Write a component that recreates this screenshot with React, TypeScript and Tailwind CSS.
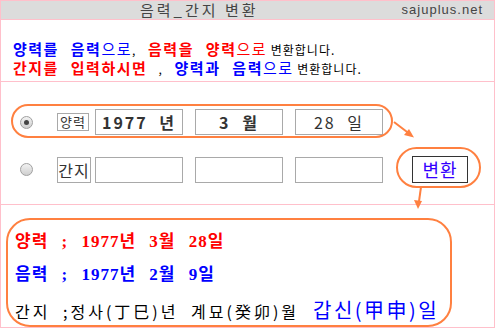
import React from 'react';

const ko = "font-['Noto_Sans_CJK_KR',sans-serif]";
const serif = "font-['Liberation_Serif','Noto_Sans_CJK_KR',serif]";

function Radio({ checked }: { checked?: boolean }) {
  return (
    <span className="flex h-[13px] w-[13px] items-center justify-center rounded-full border border-[#a0a0a0] bg-gradient-to-b from-[#f2f2f2] to-[#cfcfcf]">
      {checked && <span className="h-[5px] w-[5px] rounded-full bg-[#444]" />}
    </span>
  );
}

function Box({ children }: { children?: React.ReactNode }) {
  return (
    <div className="flex h-[26px] w-[88px] items-center justify-center border border-[#a9a9a9] bg-white text-[16px] font-bold tracking-[2px] text-[#333] [word-spacing:6px]">
      {children}
    </div>
  );
}

export default function App() {
  return (
    <div className={`relative h-[328px] w-[495px] border border-[#ffc0cb] bg-white ${ko}`}>
      {/* title bar */}
      <div className="flex h-[19px] items-center border-b border-[#ffc0cb] bg-[#dcdcdc]">
        <span className="pl-[139px] text-[15px] leading-[18px] tracking-[3px] text-[#444]">음력_간지 변환</span>
        <span className="ml-auto pr-[11px] font-['Liberation_Sans',sans-serif] text-[13px] leading-[18px] tracking-[1px] text-[#444]">sajuplus.net</span>
      </div>

      {/* intro */}
      <div className="h-[62px] border-b border-[#ffc0cb] pl-[12px] pt-[20px] text-[15px] leading-[18px] tracking-[1.5px] [word-spacing:7px]">
        <div>
          <b className="text-[#0000ff]">양력를 음력</b><span className="text-[#0000ff]">으로</span>
          <span className="text-[12px] text-black">, </span>
          <b className="text-[#ff0000]">음력을 양력</b><span className="text-[#ff0000]">으로</span>
          <span className="text-[12px] tracking-[1px] text-black [word-spacing:0px]"> 변환합니다.</span>
        </div>
        <div>
          <b className="text-[#ff0000]">간지를 입력하시면</b>
          <span className="text-[12px] text-black"> , </span>
          <b className="text-[#0000ff]">양력과 음력</b><span className="text-[#0000ff]">으로</span>
          <span className="text-[12px] tracking-[1px] text-black [word-spacing:0px]"> 변환합니다.</span>
        </div>
      </div>

      {/* form */}
      <div className="flex h-[123px] flex-col gap-[21px] border-b border-[#ffc0cb] pt-[27px]">
        <div className="flex items-center">
          <div className="ml-[19px]"><Radio checked /></div>
          <div className="ml-[24px] flex h-[18px] w-[32px] items-center justify-center border border-[#a9a9a9] text-[13px] tracking-[1px] text-[#333]">양력</div>
          <div className="ml-[6px] flex gap-[12px]">
            <Box>1977 년</Box>
            <Box>3 월</Box>
            <div className="flex h-[26px] w-[88px] items-center justify-center border border-[#a9a9a9] text-[16px] tracking-[2px] text-[#333] [word-spacing:6px]">28 일</div>
          </div>
        </div>
        <div className="flex items-center">
          <div className="ml-[19px]"><Radio /></div>
          <div className="ml-[24px] flex h-[26px] w-[34px] items-center justify-center border border-[#a9a9a9] text-[16px] tracking-[1px] text-[#333]">간지</div>
          <div className="ml-[4px] flex gap-[12px]">
            <Box />
            <Box />
            <Box />
          </div>
          <div className="ml-[29px] flex h-[27px] w-[56px] items-center justify-center border border-[#333] text-[18px] tracking-[1px] text-[#3300ff]">변환</div>
        </div>
      </div>

      {/* result */}
      <div className="pt-[13px]">
        <div className="ml-[5px] flex h-[109px] w-[446px] flex-col rounded-[24px] border-2 border-[#ff8040] pl-[7px] pt-[12px]">
          <div className={`h-[33px] text-[17px] font-bold leading-[20px] tracking-[1px] text-[#ff0000] [word-spacing:8px] ${serif}`}>양력 ; 1977년 3월 28일</div>
          <div className={`h-[33px] text-[17px] font-bold leading-[20px] tracking-[1px] text-[#0000ff] [word-spacing:8px] ${serif}`}>음력 ; 1977년 2월 9일</div>
          <div className="flex items-end text-[16px] leading-[22px] text-black">
            <span className="tracking-[3px] [word-spacing:6px]">간지 ;정사(丁巳)년 계묘(癸卯)월</span>
            <span className="ml-[14px] text-[20px] leading-[24px] tracking-[2.5px] text-[#0000ff]">갑신(甲申)일</span>
          </div>
        </div>
      </div>

      {/* annotations */}
      <svg className="pointer-events-none absolute left-[-1px] top-[-1px]" width="495" height="328" viewBox="0 0 495 328">
        <g fill="none" stroke="#ff8040" strokeWidth="2">
          <rect x="12" y="105" width="380" height="32" rx="16" />
          <rect x="397" y="148" width="83" height="39" rx="19.5" />
          <line x1="394" y1="122" x2="411" y2="135" />
          <line x1="421" y1="187" x2="418.5" y2="205" />
        </g>
        <g fill="#ff8040">
          <polygon points="414,137.5 404,135 409,129" />
          <polygon points="418,209 414,200 422,201" />
        </g>
      </svg>
    </div>
  );
}
